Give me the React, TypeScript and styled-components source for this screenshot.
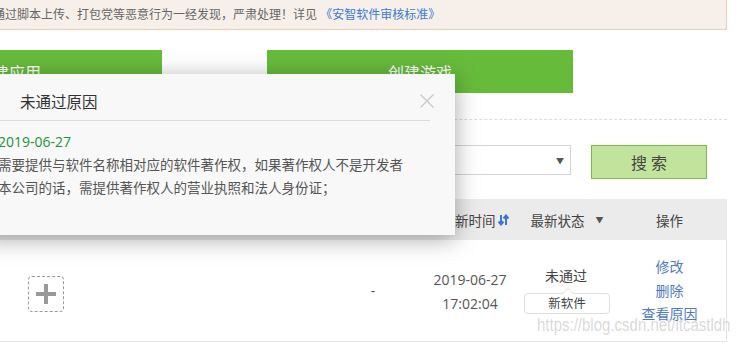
import React from 'react';
import styled, { createGlobalStyle } from 'styled-components';

const GlobalStyle = createGlobalStyle`
  html, body {
    margin: 0;
    padding: 0;
    background: #fff;
    overflow: hidden;
  }
  body {
    font-family: "Open Sans", "Noto Sans CJK SC", sans-serif;
    color: #555;
  }
  * {
    box-sizing: border-box;
  }
`;

// 页面整体向左偏移，截图只截到了右半部分
const Page = styled.div`
  position: relative;
  width: 887px;
  margin-left: -160px;
  height: 343px;
`;

const Notice = styled.div`
  height: 30px;
  padding-left: 153px;
  background: #f7efea;
  border-bottom: 1px solid #eecbb3;
  border-right: 1px solid #eecbb3;
  font-size: 12px;
  line-height: 29px;
  color: #666;
  white-space: nowrap;
`;

const NoticeLink = styled.a`
  color: #3b7bd6;
  text-decoration: none;
`;

const ButtonRow = styled.div`
  display: flex;
  gap: 105px;
  margin-top: 20px;
  padding-left: 16px;
`;

const BigButton = styled.div`
  width: 306px;
  height: 43px;
  background: #67bb3b;
  color: #fff;
  font-size: 16px;
  display: flex;
  align-items: center;
  justify-content: center;
`;

const Dashed = styled.div`
  margin-top: 26px;
  border-top: 1px dashed #dcdcdc;
`;

const FilterRow = styled.div`
  display: flex;
  align-items: flex-start;
  justify-content: flex-end;
  gap: 20px;
  margin-top: 25px;
  padding-right: 20px;
`;

const Select = styled.div`
  width: 260px;
  height: 30px;
  border: 1px solid #d4d4d4;
  background: #fff;
  display: flex;
  align-items: center;
  justify-content: flex-end;
  padding-right: 6px;
  font-size: 8px;
  color: #555;
`;

const SearchButton = styled.div`
  width: 116px;
  height: 34px;
  background: #c1e39b;
  border: 1px solid #78bd48;
  display: flex;
  align-items: center;
  justify-content: center;
  font-size: 16px;
  letter-spacing: 4px;
  padding-left: 4px;
  color: #444;
`;

const Table = styled.div`
  margin-top: 20px;
`;

const columns = '252px 234px 94px 100px 92px 115px';

const HeaderRow = styled.div`
  display: grid;
  grid-template-columns: ${columns};
  height: 41px;
  background: #ebebeb;
  align-items: center;
  font-size: 13.5px;
  color: #444;
`;

const HeaderCell = styled.div<{ $shift?: number }>`
  display: flex;
  align-items: center;
  justify-content: center;
  gap: 2px;
  padding-left: ${p => p.$shift ?? 0}px;
`;

const Caret = styled.span`
  font-size: 8px;
  margin-left: 9px;
  color: #555;
`;

const BodyRow = styled.div`
  display: grid;
  grid-template-columns: ${columns};
  height: 102px;
  align-items: center;
  border-bottom: 1px solid #e4e4e4;
  border-right: 1px solid #e4e4e4;
`;

const Cell = styled.div<{ $pad?: number }>`
  display: flex;
  flex-direction: column;
  align-items: ${p => (p.$pad ? 'flex-start' : 'center')};
  padding-left: ${p => p.$pad ?? 0}px;
  font-size: 14px;
  color: #555;
`;

const AddBox = styled.div`
  width: 36px;
  height: 36px;
  margin-top: 7px;
  border: 1px dashed #9a9a9a;
  border-radius: 4px;
  display: flex;
  align-items: center;
  justify-content: center;
`;

const DateText = styled.div`
  line-height: 24px;
  text-align: center;
  margin-top: 2px;
`;

const StatusText = styled.div`
  line-height: 20px;
  margin-bottom: 7px;
  margin-top: -2px;
  color: #444;
`;

const Tag = styled.div`
  position: relative;
  width: 86px;
  height: 21px;
  border: 1px solid #dedede;
  border-radius: 4px;
  font-size: 12.5px;
  line-height: 19px;
  text-align: center;
  color: #444;
  margin-left: 2px;

  &::before {
    content: '';
    position: absolute;
    top: -7px;
    left: 37px;
    border: 6px solid transparent;
    border-top: 0;
    border-bottom: 7px solid #dedede;
  }
  &::after {
    content: '';
    position: absolute;
    top: -6px;
    left: 38px;
    border: 5px solid transparent;
    border-top: 0;
    border-bottom: 6px solid #fff;
  }
`;

const OpLink = styled.a`
  color: #4f7bbd;
  font-size: 14px;
  line-height: 23.5px;
  text-decoration: none;
`;

const Modal = styled.div`
  position: absolute;
  left: 140px;
  top: 74px;
  width: 475px;
  height: 161px;
  background: #f8f8f8;
  box-shadow: 0 4px 22px rgba(0, 0, 0, 0.35);
`;

const ModalHead = styled.div`
  height: 47px;
  margin: 0 25px 0 20px;
  padding: 9px 0 0 20px;
  border-bottom: 1px solid #dcdcdc;
  font-size: 15.5px;
  line-height: 38px;
  color: #333;
`;

const CloseIcon = styled.svg`
  position: absolute;
  top: 20px;
  right: 21px;
`;

const ModalBody = styled.div`
  padding: 10px 0 0 18px;
`;

const GreenDate = styled.div`
  color: #24913a;
  font-size: 14px;
  line-height: 22px;
`;

const Reason = styled.div`
  font-family: "Noto Sans CJK SC", sans-serif;
  font-size: 13.5px;
  line-height: 23px;
  color: #555;
  white-space: nowrap;
`;

const Watermark = styled.div`
  position: absolute;
  left: 697px;
  top: 314px;
  font-family: "Liberation Sans", sans-serif;
  font-size: 15px;
  transform: scaleY(1.2);
  transform-origin: left top;
  color: rgba(170, 170, 170, 0.45);
  white-space: nowrap;
`;

const SortIcon = () => (
  <svg width="11" height="12" viewBox="0 0 11 12">
    <path d="M3 1v9M0.5 7.5L3 10.5 5.5 7.5" stroke="#3a78cf" strokeWidth="2" fill="none" />
    <path d="M8 11V2M5.5 4.5L8 1.5 10.5 4.5" stroke="#3a78cf" strokeWidth="2" fill="none" />
  </svg>
);

const App: React.FC = () => {
  return (
    <Page>
      <GlobalStyle />
      <Notice>
        通过脚本上传、打包党等恶意行为一经发现，严肃处理！详见 <NoticeLink>《安智软件审核标准》</NoticeLink>
      </Notice>

      <ButtonRow>
        <BigButton>创建应用</BigButton>
        <BigButton>创建游戏</BigButton>
      </ButtonRow>

      <Dashed />

      <FilterRow>
        <Select>▼</Select>
        <SearchButton>搜索</SearchButton>
      </FilterRow>

      <Table>
        <HeaderRow>
          <HeaderCell>图标</HeaderCell>
          <HeaderCell>名称</HeaderCell>
          <HeaderCell>版本</HeaderCell>
          <HeaderCell $shift={10}>
            最新时间<SortIcon />
          </HeaderCell>
          <HeaderCell $shift={2}>
            最新状态<Caret>▼</Caret>
          </HeaderCell>
          <HeaderCell>操作</HeaderCell>
        </HeaderRow>
        <BodyRow>
          <Cell $pad={188}>
            <AddBox>
              <svg width="22" height="22" viewBox="0 0 22 22">
                <path d="M11 1v20M1 11h20" stroke="#999" strokeWidth="4" />
              </svg>
            </AddBox>
          </Cell>
          <Cell />
          <Cell>-</Cell>
          <Cell>
            <DateText>
              2019-06-27
              <br />
              17:02:04
            </DateText>
          </Cell>
          <Cell>
            <StatusText>未通过</StatusText>
            <Tag>新软件</Tag>
          </Cell>
          <Cell>
            <OpLink>修改</OpLink>
            <OpLink>删除</OpLink>
            <OpLink>查看原因</OpLink>
          </Cell>
        </BodyRow>
      </Table>

      <Modal>
        <ModalHead>未通过原因</ModalHead>
        <CloseIcon width="14" height="14" viewBox="0 0 14 14">
          <path d="M0.5 0.5L13.5 13.5M13.5 0.5L0.5 13.5" stroke="#c8c8c8" strokeWidth="1.2" />
        </CloseIcon>
        <ModalBody>
          <GreenDate>2019-06-27</GreenDate>
          <Reason>
            需要提供与软件名称相对应的软件著作权，如果著作权人不是开发者
            <br />
            本公司的话，需提供著作权人的营业执照和法人身份证；
          </Reason>
        </ModalBody>
      </Modal>

      <Watermark>https://blog.csdn.net/itcastldh</Watermark>
    </Page>
  );
};

export default App;
